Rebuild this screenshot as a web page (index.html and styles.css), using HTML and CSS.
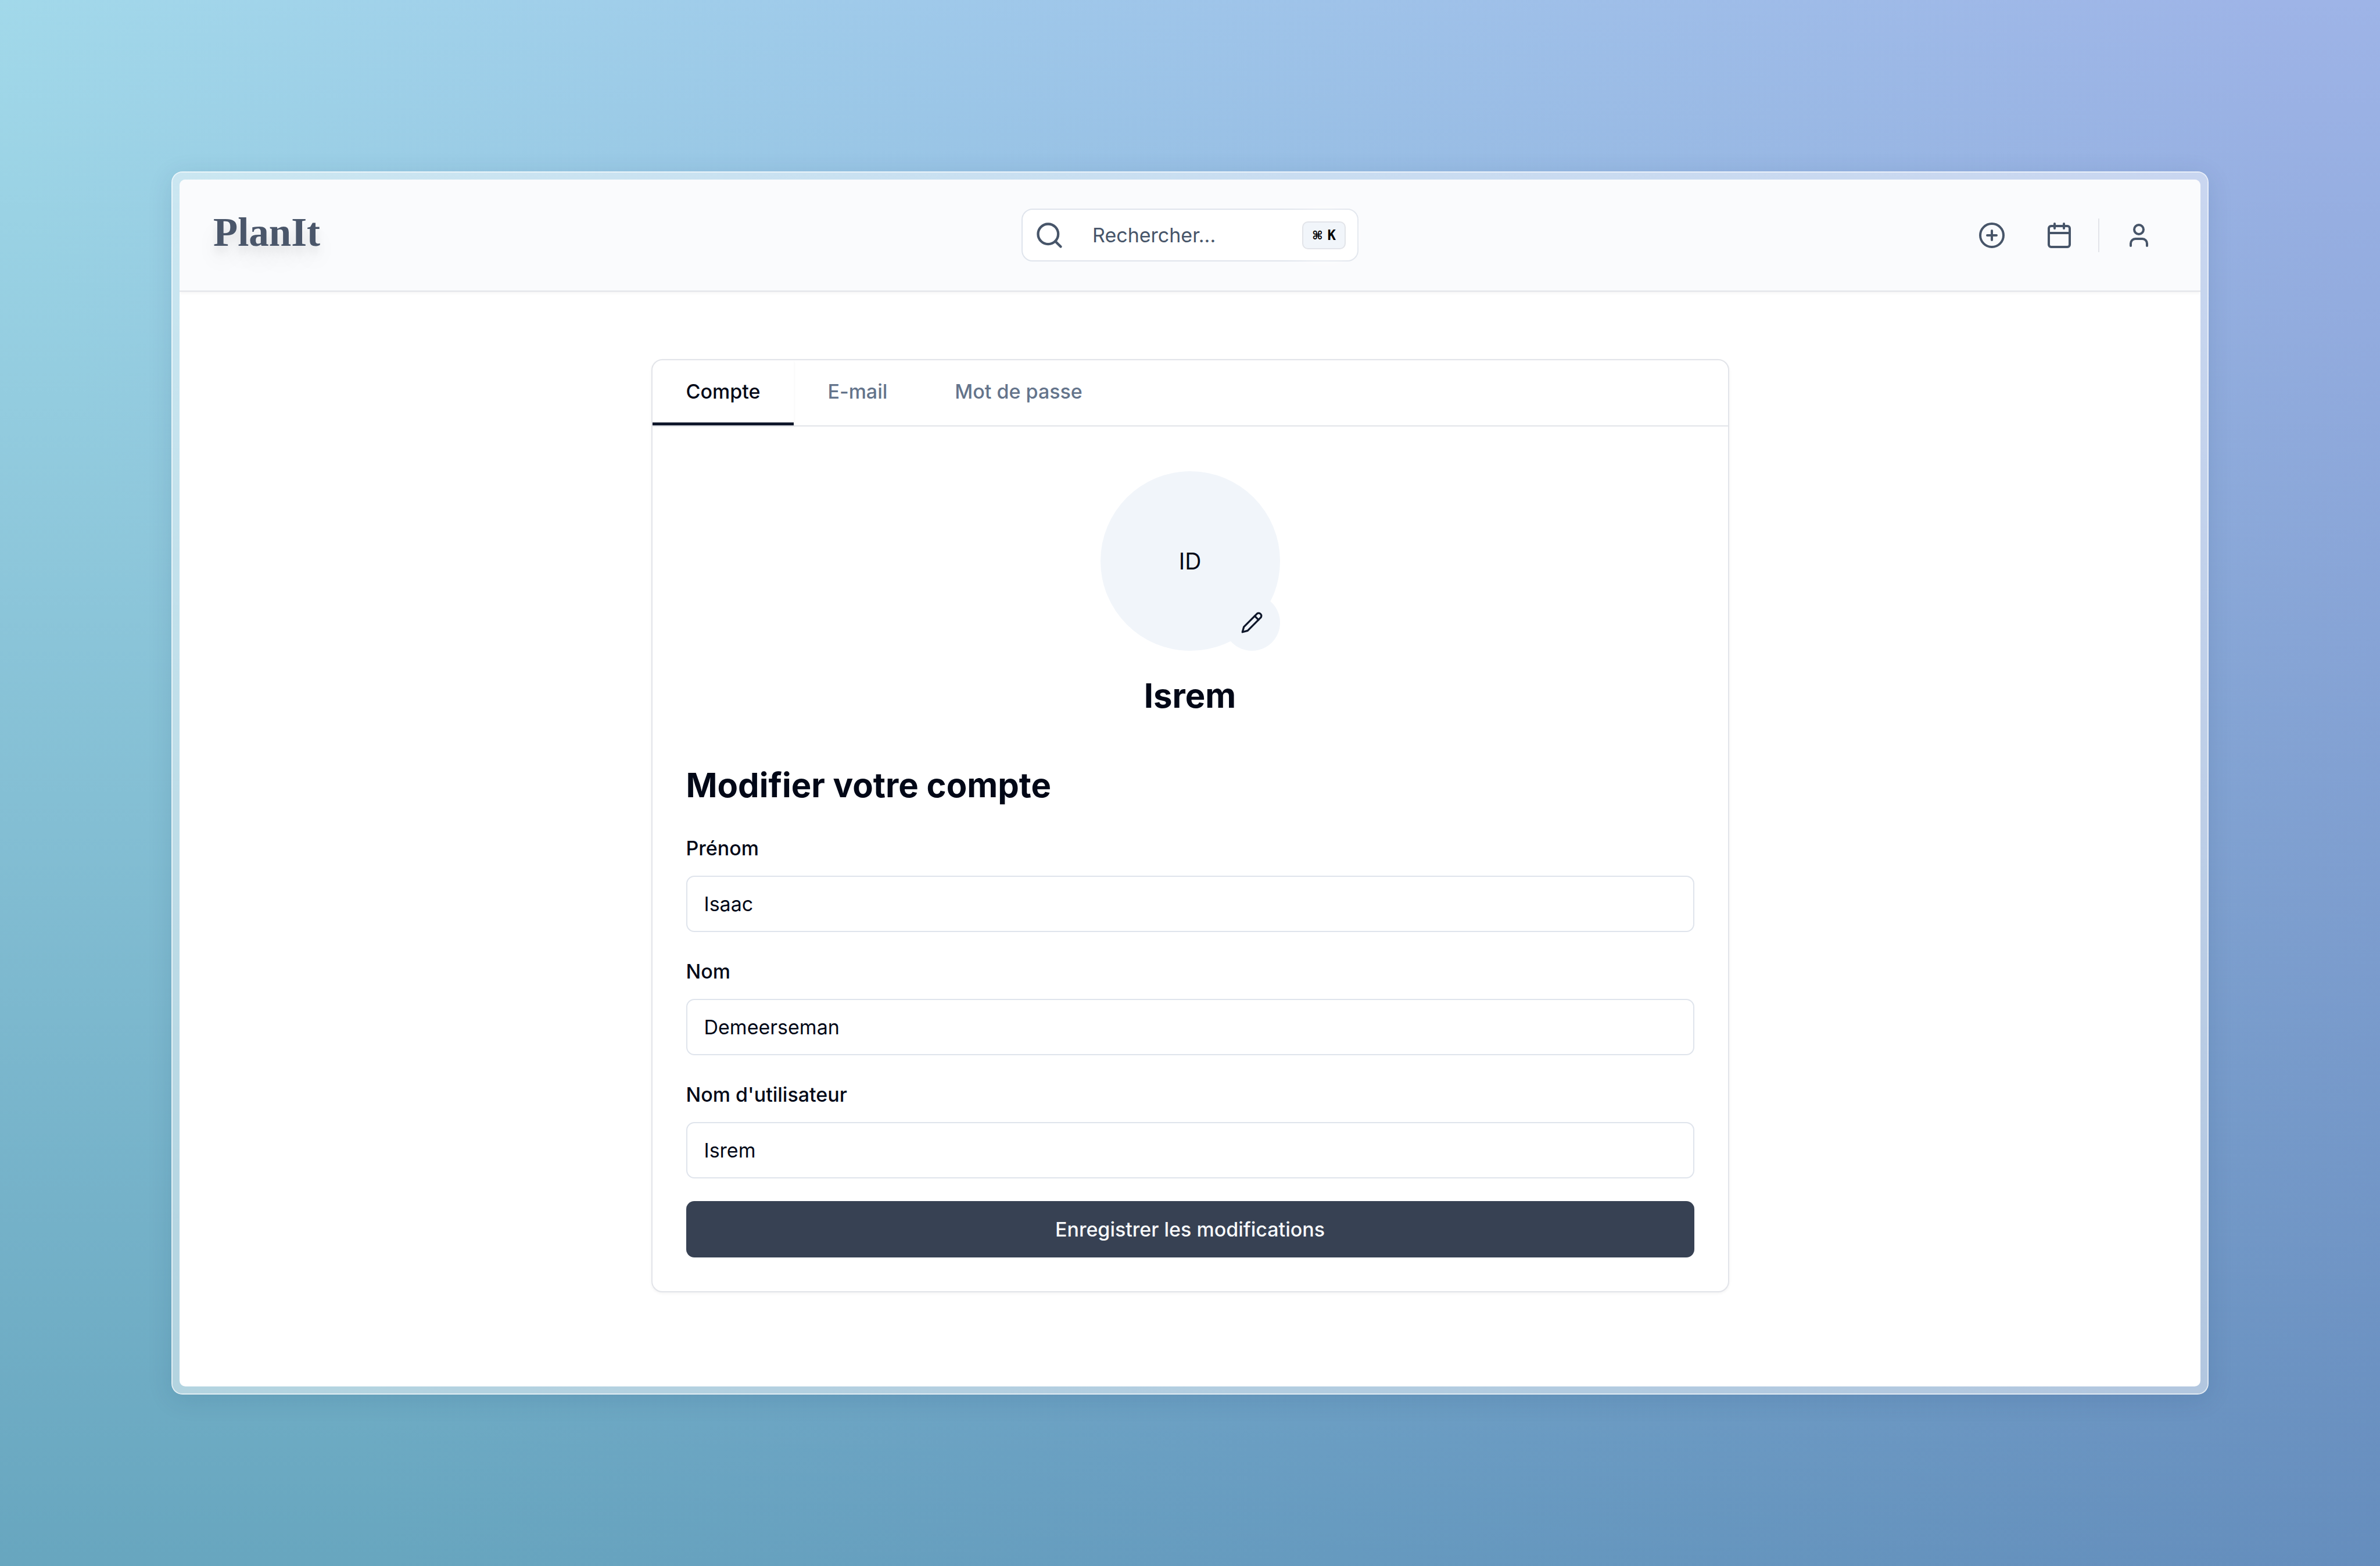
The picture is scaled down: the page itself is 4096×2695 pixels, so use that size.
FILE: index.html
```html
<!DOCTYPE html>
<html lang="fr">
<head>
<meta charset="utf-8">
<meta name="viewport" content="width=device-width, initial-scale=1">
<title>PlanIt – Compte</title>
<link rel="stylesheet" href="styles.css">
</head>
<body>
<div class="frame">
  <div class="app">
    <header class="topbar">
      <a class="logo" href="#">PlanIt</a>
      <button class="search" type="button">
        <svg class="search-icon" viewBox="0 0 24 24" aria-hidden="true"><circle cx="11" cy="11" r="8"/><path d="m21 21-4.3-4.3"/></svg>
        <span class="search-text">Rechercher...</span>
        <kbd class="kbd"><span class="kbd-mod">⌘</span><span>K</span></kbd>
      </button>
      <nav class="actions" aria-label="Actions">
        <button class="icon-button" type="button" aria-label="Ajouter">
          <svg viewBox="0 0 24 24" aria-hidden="true"><circle cx="12" cy="12" r="10"/><path d="M8 12h8M12 8v8"/></svg>
        </button>
        <button class="icon-button" type="button" aria-label="Calendrier">
          <svg viewBox="0 0 24 24" aria-hidden="true"><rect x="3" y="4" width="18" height="18" rx="2"/><path d="M16 2v4M8 2v4M3 10h18"/></svg>
        </button>
        <span class="divider"></span>
        <button class="icon-button" type="button" aria-label="Profil">
          <svg viewBox="0 0 24 24" aria-hidden="true"><path d="M19 21v-2a4 4 0 0 0-4-4H9a4 4 0 0 0-4 4v2"/><circle cx="12" cy="7" r="4"/></svg>
        </button>
      </nav>
    </header>
    <main class="content">
      <section class="card">
        <div class="tabs" role="tablist">
          <button class="tab tab-active" type="button" role="tab" aria-selected="true">Compte</button>
          <button class="tab" type="button" role="tab" aria-selected="false">E-mail</button>
          <button class="tab" type="button" role="tab" aria-selected="false">Mot de passe</button>
        </div>
        <div class="panel">
          <div class="profile">
            <div class="avatar">
              <span>ID</span>
              <button class="avatar-edit" type="button" aria-label="Modifier la photo">
                <svg viewBox="0 0 24 24" aria-hidden="true"><path d="M17 3a2.85 2.83 0 1 1 4 4L7.500 20.500 2 22l1.500-5.500Z"/><path d="m15 5 4 4"/></svg>
              </button>
            </div>
            <h1 class="title">Isrem</h1>
          </div>
          <h2 class="title">Modifier votre compte</h2>
          <form class="form">
            <div class="field">
              <label for="firstname">Prénom</label>
              <input id="firstname" type="text" value="Isaac">
            </div>
            <div class="field">
              <label for="lastname">Nom</label>
              <input id="lastname" type="text" value="Demeerseman">
            </div>
            <div class="field">
              <label for="username">Nom d'utilisateur</label>
              <input id="username" type="text" value="Isrem">
            </div>
            <button class="submit" type="button">Enregistrer les modifications</button>
          </form>
        </div>
      </section>
    </main>
  </div>
</div>
</body>
</html>
```
FILE: styles.css
```css
:root {
  --ink: #020817;
  --slate: #475569;
  --muted: #64748b;
  --line: #e2e4e9;
  --line-cool: #dfe4ec;
  --soft: #f1f5fa;
}

* { box-sizing: border-box; }

body {
  margin: 0;
  min-height: 100vh;
  display: flex;
  padding: 295px;
  background:
    linear-gradient(to bottom, #fff, #a3c3d0),
    linear-gradient(75deg, #a2d9ea 14%, #9fc9ea 48%, #9eb4e7 96%);
  background-blend-mode: multiply;
  color: var(--ink);
  font: 400 34px/48px Inter, "Liberation Sans", sans-serif;
}

button, input { font: inherit; color: inherit; margin: 0; }

button { border: 0; background: none; padding: 0; cursor: pointer; }

svg {
  display: block;
  fill: none;
  stroke: currentColor;
  stroke-width: 2;
  stroke-linecap: round;
  stroke-linejoin: round;
}

.frame {
  flex: 1;
  display: flex;
  padding: 12px;
  border: 2px solid rgba(255, 255, 255, 0.8);
  border-radius: 19px;
  background: rgba(255, 255, 255, 0.48);
  background-clip: padding-box;
  box-shadow: 0 8px 44px rgba(20, 50, 90, 0.12);
}

.app {
  flex: 1;
  display: flex;
  flex-direction: column;
  overflow: hidden;
  border-radius: 10px;
  background: #fff;
}

.topbar {
  display: grid;
  grid-template-columns: 1fr 580px 1fr;
  align-items: center;
  height: 193px;
  padding: 0 58px;
  border-bottom: 2px solid var(--line);
  background: #fafbfd;
  box-shadow: 0 2px 5px rgba(0, 0, 0, 0.05);
  color: var(--slate);
}

.logo {
  justify-self: start;
  padding-bottom: 8px;
  color: #4a566a;
  font: 700 69px/77px "Liberation Serif", serif;
  text-decoration: none;
  text-shadow: 0 10px 16px rgba(0, 0, 0, 0.08), 0 24px 36px rgba(0, 0, 0, 0.08);
}

.search {
  display: flex;
  align-items: center;
  height: 91px;
  padding: 0 20px;
  border: 2px solid var(--line-cool);
  border-radius: 19px;
  background: #fff;
}

.search-icon { width: 52px; height: 52px; }

.search-text { flex: 1; padding-left: 48px; text-align: left; }

.kbd {
  display: flex;
  align-items: center;
  justify-content: center;
  gap: 8px;
  width: 75px;
  height: 48px;
  border: 2px solid var(--line);
  border-radius: 10px;
  background: var(--soft);
  box-shadow: 0 0 48px 8px #fff;
  color: #000;
  font: 700 24px/44px "DejaVu Sans Mono", monospace;
}

.kbd-mod { font: 700 20px/44px "DejaVu Sans", sans-serif; }

.actions { justify-self: end; display: flex; align-items: center; gap: 19px; }

.icon-button { display: grid; place-items: center; width: 97px; height: 97px; }

.icon-button svg { width: 48px; height: 48px; }

.divider { width: 2px; height: 58px; background: var(--line); }

.content { padding: 116px 58px 160px; }

.card {
  max-width: 1855px;
  margin: 0 auto;
  overflow: hidden;
  border: 2px solid var(--line);
  border-radius: 19px;
  background: #fff;
  box-shadow: 0 2px 5px rgba(0, 0, 0, 0.05);
}

.tabs { display: flex; border-bottom: 2px solid var(--line); }

.tab {
  height: 112px;
  padding: 0 58px;
  border-bottom: 5px solid transparent;
  color: var(--muted);
  font-weight: 500;
}

.tab-active {
  border-color: #0f172a;
  color: var(--ink);
  box-shadow: 0 2px 5px rgba(0, 0, 0, 0.05);
}

.panel { padding: 77px 58px 58px; }

.profile { display: flex; flex-direction: column; align-items: center; gap: 39px; }

.avatar {
  position: relative;
  display: grid;
  place-items: center;
  width: 309px;
  height: 309px;
  border-radius: 50%;
  background: var(--soft);
  font-size: 39px;
}

.avatar-edit {
  position: absolute;
  right: 0;
  bottom: 0;
  display: grid;
  place-items: center;
  width: 97px;
  height: 97px;
  border-radius: 50%;
  background: var(--soft);
  color: #0f172a;
}

.avatar-edit svg { width: 39px; height: 39px; }

.title { margin: 0; font-size: 58px; line-height: 77px; font-weight: 700; }

.profile + .title { margin-top: 77px; }

.form { display: flex; flex-direction: column; margin-top: 46px; }

.field { display: flex; flex-direction: column; gap: 23px; }

.field + .field { margin-top: 44px; }

.field label { font-weight: 500; }

.field input {
  width: 100%;
  height: 97px;
  padding: 0 29px;
  border: 2px solid var(--line-cool);
  border-radius: 14px;
  background: #fff;
}

.submit {
  height: 97px;
  margin-top: 39px;
  border-radius: 14px;
  background: #374153;
  color: #f8fafc;
  font-weight: 500;
}
```
